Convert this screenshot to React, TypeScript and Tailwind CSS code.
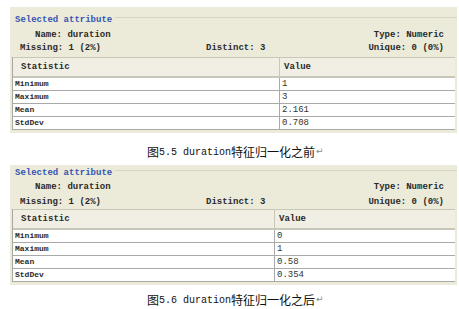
import React from "react";

type PanelProps = {
  rows: [string, string][];
  divider: number;
  titlePt: string;
  nameMt: string;
  missMt: string;
  tableMt: string;
  headerH: string;
};

const mono = { fontFamily: '"Liberation Mono", "DejaVu Sans Mono", monospace' };

function Panel({ rows, divider, titlePt, nameMt, missMt, tableMt, headerH }: PanelProps) {
  return (
    <div className="ml-[10px] w-[447px] bg-[#ecead9] pb-[3px] text-[9px] leading-[10px] font-bold text-[#2a2a2a]" style={mono}>
      <div className={`flex items-center pl-[5px] ${titlePt}`}>
        <span className="text-[#3656b4]">Selected attribute</span>
        <div className="ml-[3px] h-px flex-1 bg-[#d6d4c4] -translate-y-[3px]" />
      </div>
      <div className={`flex ${nameMt}`}>
        <span className="pl-[25px]">Name: duration</span>
        <span className="ml-auto mr-[13px]">Type: Numeric</span>
      </div>
      <div className={`flex ${missMt}`}>
        <span className="w-[196px] pl-[10px]">Missing: 1 (2%)</span>
        <span>Distinct: 3</span>
        <span className="ml-auto mr-[13px]">Unique: 0 (0%)</span>
      </div>
      <div className={`ml-[2px] w-[443px] border-l border-[#a8a8a0] ${tableMt}`}>
        <div className={`flex ${headerH} items-center border-t border-b-2 border-[#c9c7b8] bg-[#f1efe4]`}>
          <span className="pl-[8px] font-bold" style={{ width: divider - 12 }}>Statistic</span>
          <span className="pl-[4px] border-l border-[#c9c7b8] h-full flex items-center">Value</span>
        </div>
        {rows.map(([k, v]) => (
          <div key={k} className="flex h-[13px] items-center bg-white border-b border-[#a9a9a9]">
            <span className="pl-[2px] text-[8px] font-bold" style={{ width: divider - 12 }}>{k}</span>
            <span className="pl-[2px] h-full flex items-center border-l border-[#a9a9a9] font-normal text-[#333]">{v}</span>
          </div>
        ))}
      </div>
    </div>
  );
}

function Caption({ num, tail, mt }: { num: string; tail: string; mt: string }) {
  return (
    <div className={`flex items-center pl-[147px] h-[14px] text-[#111] ${mt}`}>
      <span className="text-[12px]" style={{ fontFamily: '"Noto Sans CJK SC", sans-serif' }}>图</span>
      <span className="text-[10px]" style={mono}>{num} duration</span>
      <span className="text-[12px]" style={{ fontFamily: '"Noto Sans CJK SC", sans-serif' }}>{tail}</span>
      <span className="text-[9px] text-[#888] ml-[1px]" style={{ fontFamily: '"DejaVu Sans", sans-serif' }}>↵</span>
    </div>
  );
}

export default function App() {
  return (
    <div className="w-[459px] h-[309px] bg-white overflow-hidden pt-[7px]">
      <Panel
        rows={[["Minimum", "1"], ["Maximum", "3"], ["Mean", "2.161"], ["StdDev", "0.708"]]}
        divider={278}
        titlePt="pt-[8px]"
        nameMt="mt-[5px]"
        missMt="mt-[3px]"
        tableMt="mt-[4px]"
        headerH="h-[21px]"
      />
      <Caption num="5.5" tail="特征归一化之前" mt="mt-[12px]" />
      <div className="h-[6px]" />
      <Panel
        rows={[["Minimum", "0"], ["Maximum", "1"], ["Mean", "0.58"], ["StdDev", "0.354"]]}
        divider={273}
        titlePt="pt-[3px]"
        nameMt="mt-[4px]"
        missMt="mt-[5px]"
        tableMt="mt-[2px]"
        headerH="h-[21px]"
      />
      <Caption num="5.6" tail="特征归一化之后" mt="mt-[8px]" />
    </div>
  );
}
